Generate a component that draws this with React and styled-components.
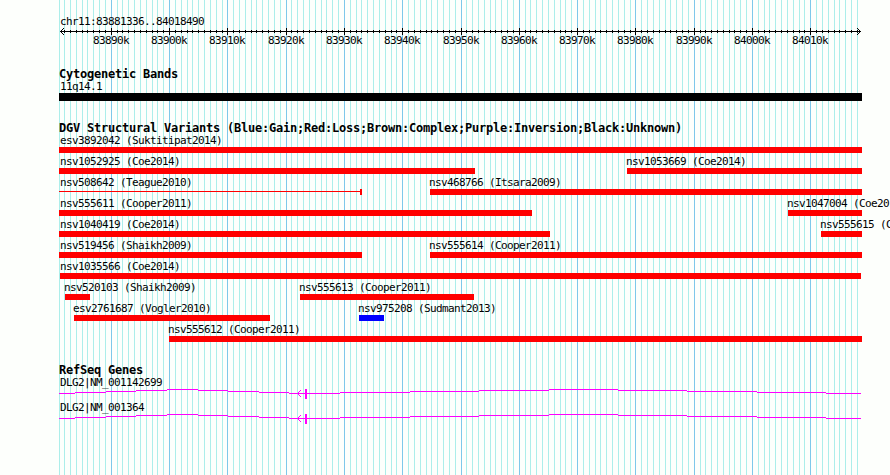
import React from 'react';
import styled, { createGlobalStyle } from 'styled-components';

const VIEW_WIDTH = 890;
const VIEW_HEIGHT = 475;
const LEFT = 59;
const RIGHT = 862;
const FIRST_MAJOR = 111.264;
const MAJOR_STEP = 58.292;

const ticks = [];
for (let i = -9; i <= 128; i++) {
  const x = Math.max(LEFT, Math.floor(FIRST_MAJOR + (i * MAJOR_STEP) / 10));
  ticks.push({ x, major: i % 10 === 0, label: `${83890 + i}k` });
}
const majorTicks = ticks.filter((tick) => tick.major);

const variantRows = [
  [{ name: 'esv3892042 (Suktitipat2014)', start: 59, end: 862 }],
  [
    { name: 'nsv1052925 (Coe2014)', start: 59, end: 475 },
    { name: 'nsv1053669 (Coe2014)', start: 627, end: 862 },
  ],
  [
    { name: 'nsv508642 (Teague2010)', start: 59, end: 362, thin: true },
    { name: 'nsv468766 (Itsara2009)', start: 430, end: 862 },
  ],
  [
    { name: 'nsv555611 (Cooper2011)', start: 59, end: 532 },
    { name: 'nsv1047004 (Coe2014)', start: 788, end: 862 },
  ],
  [
    { name: 'nsv1040419 (Coe2014)', start: 59, end: 550 },
    { name: 'nsv555615 (Cooper2011)', start: 821, end: 862 },
  ],
  [
    { name: 'nsv519456 (Shaikh2009)', start: 59, end: 362 },
    { name: 'nsv555614 (Cooper2011)', start: 430, end: 862 },
  ],
  [{ name: 'nsv1035566 (Coe2014)', start: 60, end: 861 }],
  [
    { name: 'nsv520103 (Shaikh2009)', start: 65, end: 90 },
    { name: 'nsv555613 (Cooper2011)', start: 300, end: 474 },
  ],
  [
    { name: 'esv2761687 (Vogler2010)', start: 74, end: 270 },
    { name: 'nsv975208 (Sudmant2013)', start: 359, end: 384, color: '#0000ff' },
  ],
  [{ name: 'nsv555612 (Cooper2011)', start: 169, end: 862 }],
];

const genes = ['DLG2|NM_001142699', 'DLG2|NM_001364'];

// [start, end, y] of each piece of an intron line
const intron = [
  [59, 75, 4],
  [75, 106, 3],
  [106, 136, 2],
  [136, 167, 1],
  [167, 198, 0],
  [198, 228, 1],
  [228, 259, 2],
  [259, 289, 3],
  [289, 340, 4],
  [340, 410, 3],
  [410, 479, 2],
  [479, 549, 1],
  [549, 618, 0],
  [618, 687, 1],
  [687, 757, 2],
  [757, 826, 3],
  [826, 861, 4],
];

const Chevron = ({ x, y, dir, blunt = 0, color }) => (
  <g fill={color}>
    {[-3, -2, -1, 0, 1, 2, 3].map((d) => (
      <rect
        key={d}
        x={x + dir * Math.max(Math.abs(d) - blunt, 0)}
        y={y + d}
        width="1"
        height="1"
      />
    ))}
  </g>
);

const GridLines = () => (
  <Backdrop viewBox={`0 0 ${VIEW_WIDTH} ${VIEW_HEIGHT}`}>
    {ticks.map(({ x, major }) => (
      <rect
        key={x}
        x={x}
        y="0"
        width="1"
        height={VIEW_HEIGHT}
        fill={major ? '#7ec8ea' : '#aceeea'}
      />
    ))}
  </Backdrop>
);

const Ruler = () => (
  <RulerTrack>
    <Label $left={60}>chr11:83881336..84018490</Label>
    <RulerLine $height={7}>
      <rect x="60" y="3" width="801" height="1" />
      {ticks.slice(1).map(({ x, major }) => (
        <rect
          key={x}
          x={x}
          y={major ? 0 : 2}
          width="1"
          height={major ? 7 : 3}
        />
      ))}
      <Chevron x={60} y={3} dir={1} color="#000" />
      <Chevron x={860} y={3} dir={-1} color="#000" />
    </RulerLine>
    <Lane>
      {majorTicks.map(({ x, label }) => (
        <Label key={label} $left={x - 18}>
          {label}
        </Label>
      ))}
    </Lane>
  </RulerTrack>
);

const Variant = ({ name, start, end, color, thin }) => (
  <Feature>
    <Label $left={start <= 60 ? 60 : start - 1}>{name}</Label>
    <Bar $start={start} $end={end} $color={color} $thin={thin} />
  </Feature>
);

const Gene = ({ name }) => (
  <GeneRow>
    <Label $left={60}>{name}</Label>
    <Drawing $height={11}>
      {intron.map(([start, end, y]) => (
        <rect
          key={start}
          x={start}
          y={y}
          width={end - start}
          height="1"
          fill="#ff00ff"
        />
      ))}
      <Chevron x={298} y={4} dir={1} blunt={1} color="#ff00ff" />
      <rect x="305" y="0" width="2" height="10" fill="#ff00ff" />
    </Drawing>
  </GeneRow>
);

const App = () => {
  return (
    <>
      <GlobalStyle />
      <Browser>
        <GridLines />
        <Tracks>
          <Ruler />
          <CytoTrack>
            <Title>Cytogenetic Bands</Title>
            <Label $left={60}>11q14.1</Label>
            <Band />
          </CytoTrack>
          <VariantTrack>
            <Title>
              DGV Structural Variants
              (Blue:Gain;Red:Loss;Brown:Complex;Purple:Inversion;Black:Unknown)
            </Title>
            {variantRows.map((row) => (
              <Lane key={row[0].name}>
                {row.map((variant) => (
                  <Variant key={variant.name} {...variant} />
                ))}
              </Lane>
            ))}
          </VariantTrack>
          <GeneTrack>
            <Title>RefSeq Genes</Title>
            {genes.map((name) => (
              <Gene key={name} name={name} />
            ))}
          </GeneTrack>
        </Tracks>
      </Browser>
    </>
  );
};

export default App;

const GlobalStyle = createGlobalStyle`
  body {
    margin: 0;
    background-color: #fdfffc;
    overflow: hidden;
  }
`;

const Browser = styled.div`
  display: grid;
  width: ${VIEW_WIDTH}px;
  height: ${VIEW_HEIGHT}px;
  overflow: hidden;
  color: #000;
  font-family: 'DejaVu Sans Mono', 'Liberation Mono', monospace;
`;

const Backdrop = styled.svg`
  grid-area: 1 / 1;
  width: ${VIEW_WIDTH}px;
  height: ${VIEW_HEIGHT}px;
  shape-rendering: crispEdges;
`;

const Tracks = styled.div`
  grid-area: 1 / 1;
  display: flex;
  flex-direction: column;
  min-width: 0;
  padding-top: 15px;
`;

const RulerTrack = styled.div`
  display: flex;
  flex-direction: column;
  height: 52px;
`;

const CytoTrack = styled.div`
  height: 54px;
`;

const VariantTrack = styled.div`
  height: 242px;
`;

const GeneTrack = styled.div`
  height: 80px;
`;

const Title = styled.div`
  height: 13px;
  margin-left: 59px;
  font-size: 12px;
  font-weight: bold;
  line-height: 14px;
  letter-spacing: -0.224px;
  white-space: nowrap;
`;

const Label = styled.div`
  grid-area: 1 / 1;
  height: 13px;
  margin-left: ${({ $left }) => $left}px;
  font-size: 11px;
  line-height: 13px;
  letter-spacing: -0.622px;
  white-space: nowrap;
`;

const Lane = styled.div`
  display: grid;
  grid-template-columns: ${VIEW_WIDTH}px;
`;

const Feature = styled.div`
  grid-area: 1 / 1;
  height: 21px;
`;

const Bar = styled.div`
  box-sizing: border-box;
  width: ${({ $start, $end }) => $end - $start}px;
  height: 6px;
  margin-left: ${({ $start }) => $start}px;
  background: ${({ $thin, $color = '#ff0000' }) =>
    $thin ? `linear-gradient(${$color}, ${$color}) 0 2px / 100% 1px no-repeat` : $color};
  border-right: ${({ $thin }) => ($thin ? '2px solid #ff0000' : 'none')};
`;

const Band = styled.div`
  width: ${RIGHT - LEFT}px;
  height: 8px;
  margin-left: ${LEFT}px;
  background-color: #000;
`;

const Drawing = styled.svg`
  display: block;
  flex-shrink: 0;
  width: ${VIEW_WIDTH}px;
  height: ${({ $height }) => $height}px;
  shape-rendering: crispEdges;
`;

const RulerLine = styled(Drawing)`
  margin-bottom: -1px;
`;

const GeneRow = styled.div`
  height: 25px;
`;
